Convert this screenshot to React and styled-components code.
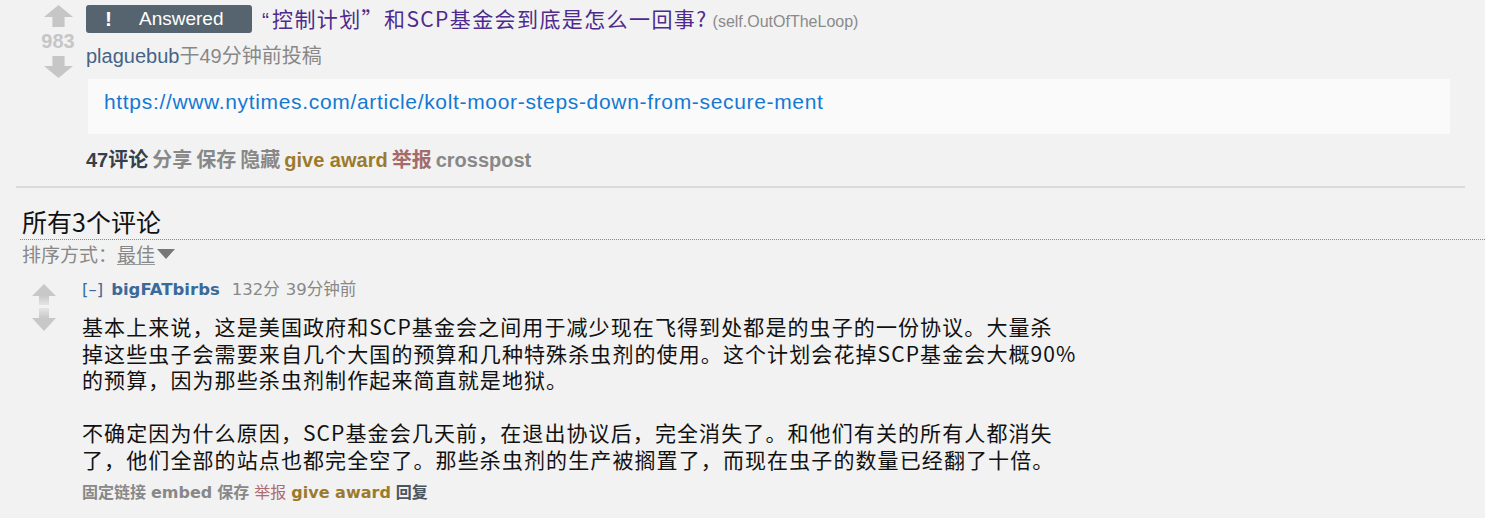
import React from 'react';
import styled, { createGlobalStyle } from 'styled-components';

const SANS = `"Liberation Sans", Arial, "Noto Sans CJK SC", sans-serif`;
const VERD = `"DejaVu Sans", Verdana, "Noto Sans CJK SC", sans-serif`;
const CJK = `"Noto Sans CJK SC", "Liberation Sans", sans-serif`;

const Global = createGlobalStyle`
  html, body { margin: 0; padding: 0; background: #f2f2f2; }
  body { font-family: ${SANS}; overflow: hidden; }
  * { box-sizing: border-box; }
`;

const Page = styled.div`
  width: 1485px;
  min-height: 518px;
  background: #f2f2f2;
`;

const Post = styled.div`
  display: flex;
  gap: 10px;
  padding: 5px 35px 0 40px;
`;

const VoteCol = styled.div`
  width: 36px;
  display: flex;
  flex-direction: column;
  align-items: center;
`;

const Score = styled.div`
  font: bold 20px ${SANS};
  color: #c6c6c6;
  line-height: 29px;
  height: 29px;
`;

const ArrowSvg = styled.svg`
  display: block;
  flex: none;
`;

function Arrow({ id, down, w = 29, h = 22, color = '#c6c6c6', fade = '#c6c6c6', mt = 0 }) {
  const hh = Math.round(h * 0.55);
  const sw = w * 0.42;
  const sx = (w - sw) / 2;
  const pts = `${w / 2},0 ${w},${hh} ${sx + sw},${hh} ${sx + sw},${h} ${sx},${h} ${sx},${hh} 0,${hh}`;
  return (
    <ArrowSvg width={w} height={h} viewBox={`0 0 ${w} ${h}`} style={{ marginTop: mt }}>
      <defs>
        <linearGradient id={id} x1="0" y1="0" x2="0" y2="1">
          <stop offset="0" stopColor={color} />
          <stop offset="0.55" stopColor={color} />
          <stop offset="1" stopColor={fade} />
        </linearGradient>
      </defs>
      <polygon
        points={pts}
        fill={`url(#${id})`}
        transform={down ? `rotate(180 ${w / 2} ${h / 2})` : undefined}
      />
    </ArrowSvg>
  );
}

const Content = styled.div`
  flex: 1;
  min-width: 0;
`;

const TitleRow = styled.div`
  display: flex;
  align-items: center;
  height: 28px;
  gap: 10px;
`;

const Badge = styled.span`
  display: flex;
  align-items: center;
  width: 166px;
  height: 28px;
  padding-left: 19px;
  background: #55646f;
  border-radius: 3px;
  color: #fff;
  font: 19px ${SANS};
`;

const Bang = styled.span`
  font-weight: bold;
  width: 34px;
  font-size: 21px;
`;

const Title = styled.span`
  font: 21px ${CJK};
  line-height: 28px;
  color: #4e2a8e;
  letter-spacing: 1.4px;
  white-space: nowrap;
`;

const OpenQuote = styled.span`
  font-family: "Liberation Sans", Arial, sans-serif;
  letter-spacing: 3px;
`;

const Domain = styled.span`
  font: 16px ${SANS};
  color: #8a8a8a;
  letter-spacing: 0;
  margin-left: 5px;
`;

const Submitted = styled.div`
  margin-top: 12px;
  font: 20px ${SANS};
  line-height: 22px;
  color: #888;
`;

const Author = styled.span`
  color: #466485;
`;

const LinkBox = styled.div`
  margin: 12px 0 0 2px;
  height: 55px;
  padding: 12px 16px 0;
  background: #fafafa;
`;

const Link = styled.a`
  font: 21px ${SANS};
  line-height: 22px;
  letter-spacing: 0.67px;
  color: #1479d3;
  text-decoration: none;
`;

const Actions = styled.div`
  display: flex;
  gap: 4px;
  margin-top: 15px;
  font: bold 20px ${SANS};
  line-height: 22px;
`;

const Act = styled.span`
  color: ${p => p.$c || '#888'};
  font-weight: ${p => (p.$light ? 'normal' : 'bold')};
`;

const Divider = styled.div`
  margin: 15px 20px 0 16px;
  height: 2px;
  background: #dadada;
`;

const CommentsHeader = styled.div`
  margin: 19px 0 0 22px;
  font: 25px ${CJK};
  line-height: 28px;
  color: #111;
`;

const Dotted = styled.div`
  margin: 4px 0 0 20px;
  border-top: 1px dotted #888;
`;

const Sort = styled.div`
  display: flex;
  align-items: center;
  margin: 3px 0 0 22px;
  font: 19px ${CJK};
  line-height: 22px;
  color: #888;
`;

const Best = styled.span`
  border-bottom: 1px solid #999;
  line-height: 20px;
`;

const Caret = styled.span`
  display: inline-block;
  width: 0;
  height: 0;
  margin-left: 2px;
  border-left: 9px solid transparent;
  border-right: 9px solid transparent;
  border-top: 10px solid #777;
`;

const Comment = styled.div`
  display: flex;
  gap: 26px;
  margin-top: 15px;
  padding-left: 32px;
`;

const CommentVotes = styled.div`
  width: 24px;
  padding-top: 4px;
  display: flex;
  flex-direction: column;
  align-items: center;
`;

const Tagline = styled.div`
  display: flex;
  gap: 6px;
  font: 16.5px ${VERD};
  line-height: 20px;
  color: #888;
`;

const Expand = styled.span`
  color: #3a6a9a;
`;

const CAuthor = styled.span`
  color: #3a6a9a;
  font-weight: bold;
  margin: 0 6px 0 2px;
`;

const Body = styled.div`
  margin-top: 13px;
  font: 21px ${CJK};
  line-height: 26.5px;
  letter-spacing: 1.1px;
  color: #111;
  white-space: nowrap;
`;

const Para = styled.p`
  margin: 0;
  & + & { margin-top: 26.5px; }
`;

const Footer = styled.div`
  display: flex;
  gap: 5px;
  margin-top: 12px;
  font: bold 16px ${VERD};
  line-height: 18px;
`;

export default function App() {
  return (
    <Page>
      <Global />
      <Post>
        <VoteCol>
          <Arrow id="pu" />
          <Score>983</Score>
          <Arrow id="pd" down />
        </VoteCol>
        <Content>
          <TitleRow>
            <Badge>
              <Bang>!</Bang>
              Answered
            </Badge>
            <Title>
              <OpenQuote>“</OpenQuote>控制计划”和SCP基金会到底是怎么一回事?
              <Domain>(self.OutOfTheLoop)</Domain>
            </Title>
          </TitleRow>
          <Submitted>
            <Author>plaguebub</Author>于49分钟前投稿
          </Submitted>
          <LinkBox>
            <Link href="#">https://www.nytimes.com/article/kolt-moor-steps-down-from-secure-ment</Link>
          </LinkBox>
          <Actions>
            <Act $c="#36404a">47评论</Act>
            <Act>分享</Act>
            <Act>保存</Act>
            <Act>隐藏</Act>
            <Act $c="#9c7a2c">give award</Act>
            <Act $c="#a46b6b">举报</Act>
            <Act>crosspost</Act>
          </Actions>
        </Content>
      </Post>
      <Divider />
      <CommentsHeader>所有3个评论</CommentsHeader>
      <Dotted />
      <Sort>
        排序方式：<Best>最佳</Best>
        <Caret />
      </Sort>
      <Comment>
        <CommentVotes>
          <Arrow id="cu" w={24} h={21} color="#c8c8c8" fade="#e4e4e4" />
          <Arrow id="cd" down w={24} h={23} color="#c8c8c8" fade="#e4e4e4" mt={3} />
        </CommentVotes>
        <Content>
          <Tagline>
            <Expand>[–]</Expand>
            <CAuthor>bigFATbirbs</CAuthor>
            <span>132分</span>
            <span>39分钟前</span>
          </Tagline>
          <Body>
            <Para>
              基本上来说，这是美国政府和SCP基金会之间用于减少现在飞得到处都是的虫子的一份协议。大量杀
              <br />
              掉这些虫子会需要来自几个大国的预算和几种特殊杀虫剂的使用。这个计划会花掉SCP基金会大概90%
              <br />
              的预算，因为那些杀虫剂制作起来简直就是地狱。
            </Para>
            <Para>
              不确定因为什么原因，SCP基金会几天前，在退出协议后，完全消失了。和他们有关的所有人都消失
              <br />
              了，他们全部的站点也都完全空了。那些杀虫剂的生产被搁置了，而现在虫子的数量已经翻了十倍。
            </Para>
          </Body>
          <Footer>
            <Act>固定链接</Act>
            <Act>embed</Act>
            <Act>保存</Act>
            <Act $c="#b06b6b" $light>举报</Act>
            <Act $c="#9c7a2c">give award</Act>
            <Act $c="#4a5560">回复</Act>
          </Footer>
        </Content>
      </Comment>
    </Page>
  );
}
